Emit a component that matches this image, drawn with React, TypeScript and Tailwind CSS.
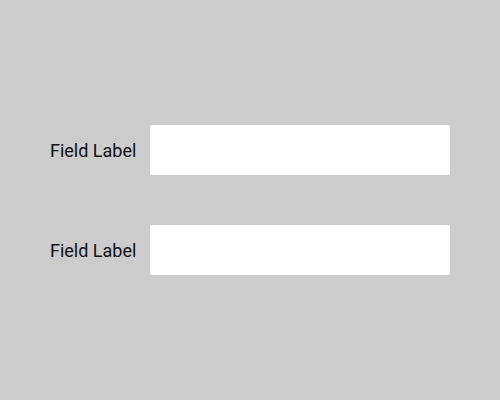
export default function App() {
  return (
    <div
      className="w-[500px] h-[400px] bg-[#cccccc] flex flex-col justify-center items-center gap-[50px]"
      style={{ fontFamily: "Roboto, sans-serif" }}
    >
      {[0, 1].map((i) => (
        <div key={i} className="w-[400px] h-[50px] flex flex-row items-center">
          <label className="w-[100px] text-[18px] text-[#111111]">Field Label</label>
          <input className="w-[300px] h-[50px] bg-white rounded-[2px] outline-none px-2" />
        </div>
      ))}
    </div>
  );
}
